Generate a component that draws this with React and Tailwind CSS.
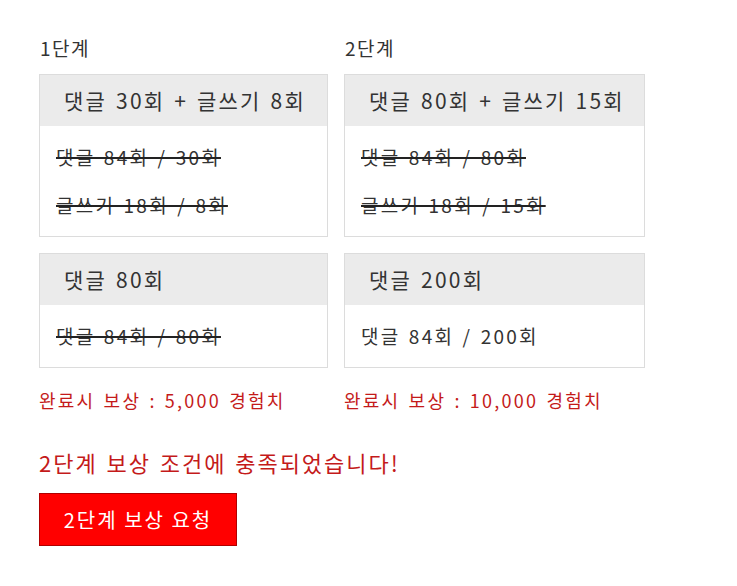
import React from 'react'

const font = { fontFamily: '"Noto Sans CJK KR", "Liberation Sans", sans-serif' }

const stages = [
  {
    label: '1단계',
    width: 'w-[289px]',
    missions: [
      {
        title: '댓글 30회 + 글쓰기 8회',
        rows: [
          { text: '댓글 84회 / 30회', done: true },
          { text: '글쓰기 18회 / 8회', done: true },
        ],
      },
      {
        title: '댓글 80회',
        rows: [{ text: '댓글 84회 / 80회', done: true }],
      },
    ],
    reward: '완료시 보상 : 5,000 경험치',
  },
  {
    label: '2단계',
    width: 'w-[301px]',
    missions: [
      {
        title: '댓글 80회 + 글쓰기 15회',
        rows: [
          { text: '댓글 84회 / 80회', done: true },
          { text: '글쓰기 18회 / 15회', done: true },
        ],
      },
      {
        title: '댓글 200회',
        rows: [{ text: '댓글 84회 / 200회', done: false }],
      },
    ],
    reward: '완료시 보상 : 10,000 경험치',
  },
]

function MissionCard({ title, rows }) {
  return (
    <div className="border border-[#dcdcdc] bg-white">
      <div className="h-[51px] bg-[#ebebeb] px-6 flex items-center text-[21px] text-[#333] whitespace-nowrap">
        {title}
      </div>
      <div className="py-[7px] px-4">
        {rows.map((r, i) => (
          <div key={i} className="h-12 flex items-center text-[19px] text-[#333] whitespace-nowrap">
            <span className={r.done ? 'line-through decoration-2 decoration-[#222]' : ''}>{r.text}</span>
          </div>
        ))}
      </div>
    </div>
  )
}

export default function App() {
  return (
    <div className="min-h-screen bg-white pl-[39px] pt-[34px] tracking-[0.14em] [word-spacing:0.12em]" style={font}>
      <div className="flex gap-4 items-start">
        {stages.map((s) => (
          <div key={s.label} className={`${s.width} flex flex-col`}>
            <div className="text-[19px] text-[#333] leading-[28px] pl-px mb-[12px] tracking-[0.08em]">{s.label}</div>
            <div className="flex flex-col gap-4">
              {s.missions.map((m, i) => (
                <MissionCard key={i} {...m} />
              ))}
            </div>
            <div className="mt-[18px] text-[18px] leading-[28px] text-[#c41a1a] whitespace-nowrap">{s.reward}</div>
          </div>
        ))}
      </div>
      <div className="mt-[33px] text-[22px] leading-[30px] text-[#c41a1a] tracking-[0.09em]">2단계 보상 조건에 충족되었습니다!</div>
      <button className="mt-[16px] w-[198px] h-[53px] bg-[#ff0000] border border-[#b00000] text-white text-[20px] tracking-[0.1em]">
        2단계 보상 요청
      </button>
    </div>
  )
}
